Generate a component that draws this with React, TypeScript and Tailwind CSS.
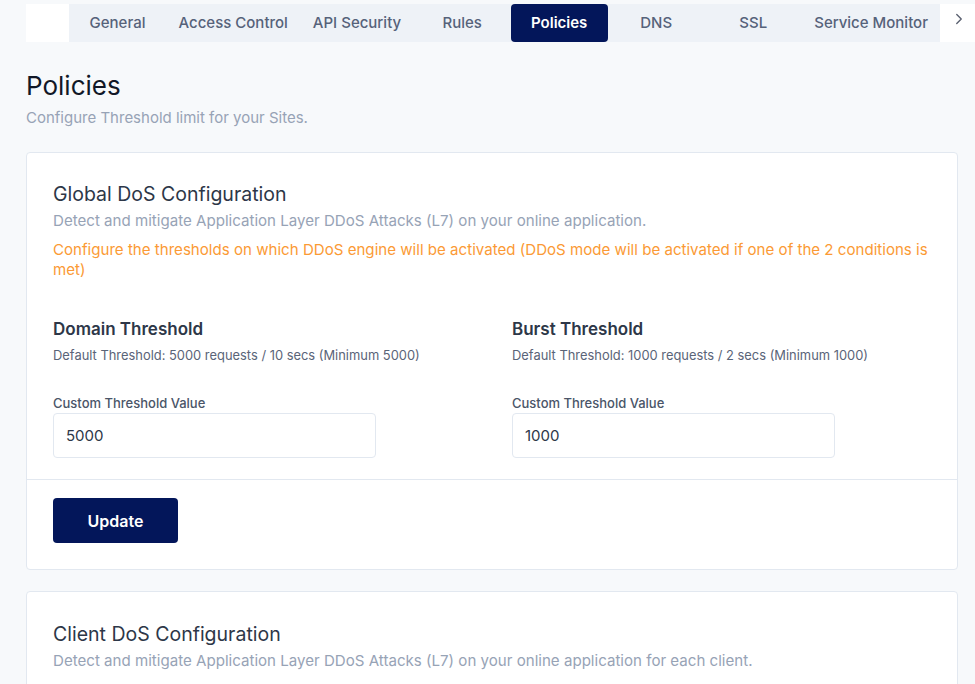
import React from 'react';
import { ChevronRight } from 'lucide-react';

const tabs = ['General', 'Access Control', 'API Security', 'Rules', 'Policies', 'DNS', 'SSL', 'Service Monitor'];

const Threshold = (props: { title: string; hint: string; value: string }) => (
  <div>
    <h3 className="text-[17px] font-semibold leading-6 text-[#2d3748]">{props.title}</h3>
    <p className="mt-[5px] text-[12.9px] leading-5 text-[#5a6478]">{props.hint}</p>
    <label className="mt-[27px] block text-[13px] font-medium leading-5 text-[#4a5568]">Custom Threshold Value</label>
    <input
      readOnly
      value={props.value}
      className="h-[45px] w-[323px] rounded border border-[#e2e8f0] bg-white px-[12px] text-[15px] text-[#2d3748] outline-none"
    />
  </div>
);

export default function App() {
  return (
    <div className="min-h-screen bg-[#f7f9fb] pl-[26px] font-['Inter',sans-serif]">
      <div className="flex h-[46px] items-start pt-[4px]">
        <div className="h-[38px] w-[43px] bg-white" />
        <div className="flex h-[38px] bg-[#eef2f7]">
          {tabs.map((tab) => (
            <div
              key={tab}
              className={
                tab === 'Policies'
                  ? 'flex min-w-[97px] items-center justify-center rounded bg-[#03165a] px-[12.5px] text-[15px] font-semibold text-white'
                  : 'flex min-w-[97px] items-center justify-center px-[12.5px] text-[15px] font-medium text-[#56627a]'
              }
            >
              {tab}
            </div>
          ))}
        </div>
        <div className="flex h-[38px] flex-1 justify-center bg-white pt-[6px] pl-[2px]">
          <ChevronRight className="h-[18px] w-[18px] text-[#5a6070]" strokeWidth={1.8} />
        </div>
      </div>

      <div className="pr-[17px]">
        <h1 className="mt-[24px] text-[26px] leading-8 text-[#111827]">Policies</h1>
        <p className="mt-[6px] text-[15px] leading-5 text-[#97a3b6]">Configure Threshold limit for your Sites.</p>

        <div className="mt-[24px] rounded border border-[#e2e8f0] bg-white">
          <div className="px-[26px] pt-[27px] pb-[21px]">
            <h2 className="text-[19.5px] leading-7 text-[#2d3748]">Global DoS Configuration</h2>
            <p className="mt-[3px] text-[15.1px] leading-5 text-[#97a3b6]">
              Detect and mitigate Application Layer DDoS Attacks (L7) on your online application.
            </p>
            <p className="mt-[9px] text-[15.1px] leading-5 text-[#fb9a35]">
              Configure the thresholds on which DDoS engine will be activated (DDoS mode will be activated if one of the 2 conditions is met)
            </p>
            <div className="mt-[37px] grid grid-cols-2 gap-x-[40px]">
              <Threshold title="Domain Threshold" hint="Default Threshold: 5000 requests / 10 secs (Minimum 5000)" value="5000" />
              <Threshold title="Burst Threshold" hint="Default Threshold: 1000 requests / 2 secs (Minimum 1000)" value="1000" />
            </div>
          </div>
          <div className="border-t border-[#e2e8f0] px-[26px] pt-[18px] pb-[26px]">
            <button className="h-[45px] w-[125px] rounded bg-[#03165a] text-[16px] font-semibold text-white">Update</button>
          </div>
        </div>

        <div className="mt-[21px] rounded border border-[#e2e8f0] bg-white px-[26px] pt-[28px] pb-[20px]">
          <h2 className="text-[19.5px] leading-7 text-[#2d3748]">Client DoS Configuration</h2>
          <p className="mt-[3px] text-[15.1px] leading-5 text-[#97a3b6]">
            Detect and mitigate Application Layer DDoS Attacks (L7) on your online application for each client.
          </p>
        </div>
      </div>
    </div>
  );
}
